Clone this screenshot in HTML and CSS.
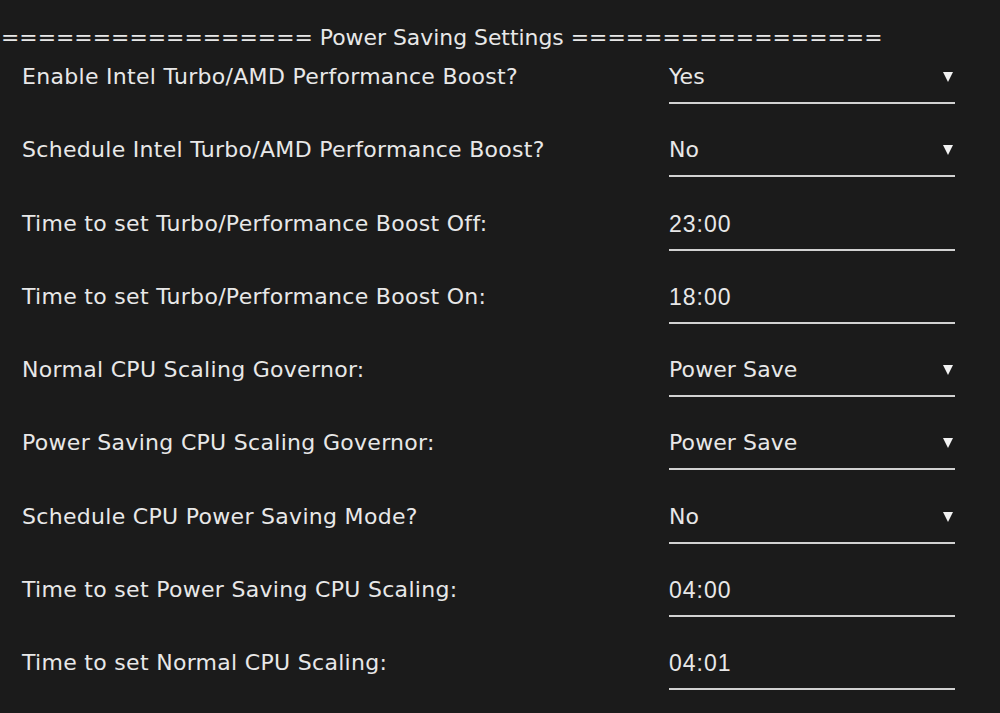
FILE: index.html
```html
<!DOCTYPE html>
<html lang="en">
<head>
  <meta charset="utf-8">
  <title>Power Saving Settings</title>
  <link rel="stylesheet" href="styles.css">
</head>

<body>
  <h2 class="section-title">================= Power Saving Settings =================</h2>

  <form class="settings">
    <div class="row">
      <label class="label">Enable Intel Turbo/AMD Performance Boost?</label>
      <div class="field select"><span>Yes</span><i class="caret"></i></div>
    </div>
    <div class="row">
      <label class="label">Schedule Intel Turbo/AMD Performance Boost?</label>
      <div class="field select"><span>No</span><i class="caret"></i></div>
    </div>
    <div class="row">
      <label class="label">Time to set Turbo/Performance Boost Off:</label>
      <div class="field time"><span>23:00</span></div>
    </div>
    <div class="row">
      <label class="label">Time to set Turbo/Performance Boost On:</label>
      <div class="field time"><span>18:00</span></div>
    </div>
    <div class="row">
      <label class="label">Normal CPU Scaling Governor:</label>
      <div class="field select"><span>Power Save</span><i class="caret"></i></div>
    </div>
    <div class="row">
      <label class="label">Power Saving CPU Scaling Governor:</label>
      <div class="field select"><span>Power Save</span><i class="caret"></i></div>
    </div>
    <div class="row">
      <label class="label">Schedule CPU Power Saving Mode?</label>
      <div class="field select"><span>No</span><i class="caret"></i></div>
    </div>
    <div class="row">
      <label class="label">Time to set Power Saving CPU Scaling:</label>
      <div class="field time"><span>04:00</span></div>
    </div>
    <div class="row">
      <label class="label">Time to set Normal CPU Scaling:</label>
      <div class="field time"><span>04:01</span></div>
    </div>
  </form>
</body>
</html>
```

FILE: styles.css
```css
:root {
  --bg: #1b1b1b;
  --text: #e8e8e8;
  --line: #d2d2d2;
}

body {
  margin: 0;
  padding: 0;
  background: var(--bg);
  color: var(--text);
  font-family: 'DejaVu Sans', Verdana, sans-serif;
  font-size: 22px;
  letter-spacing: 0.3px;
}

.section-title {
  margin: 0;
  padding: 25px 0 0 1px;
  font-size: 21.9px;
  font-weight: normal;
  line-height: 25px;
  letter-spacing: 0;
  white-space: nowrap;
}

.settings {
  margin: 0;
}

.row {
  display: grid;
  grid-template-columns: 647px 286px;
  height: 73.25px;
  padding-left: 22px;
}

.label {
  padding-top: 14px;
  line-height: 26px;
  white-space: nowrap;
}

.field {
  display: flex;
  align-items: center;
  justify-content: space-between;
  align-self: start;
  padding: 14px 0 12px;
  line-height: 26px;
  border-bottom: 2px solid var(--line);
}

.select span {
  letter-spacing: 0.1px;
}

.time span {
  font-family: 'Liberation Sans', Arial, sans-serif;
  font-size: 23px;
  letter-spacing: 1px;
}

.caret {
  width: 0;
  height: 0;
  margin-right: 2px;
  border-left: 5px solid transparent;
  border-right: 5px solid transparent;
  border-top: 10px solid #f2f2f2;
}
```
